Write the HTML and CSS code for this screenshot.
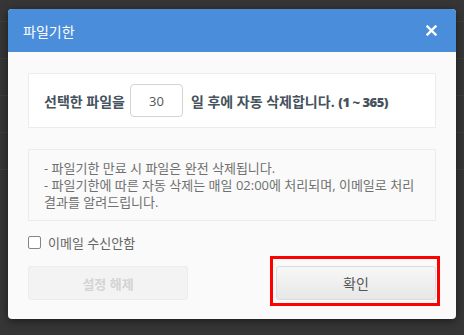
FILE: index.html
```html
<!DOCTYPE html>
<html lang="ko">

<head>
    <meta charset="UTF-8">
    <meta name="viewport" content="width=device-width, initial-scale=1.0">
    <title>파일기한</title>

    <link rel="stylesheet" href="styles.css">
</head>

<body>
    <div id="fundo">
        <div class="barra"></div>
        <div class="linha"></div>
        <div class="linha"></div>
        <div class="linha"></div>
        <div class="linha"></div>
    </div>

    <div id="dialogo">
        <div class="cabecalho">
            <span class="titulo">파일기한</span>
            <svg class="fechar" width="11" height="11" viewBox="0 0 11 11">
                <path d="M1.5 1.5 L9.5 9.5 M9.5 1.5 L1.5 9.5" stroke="#fff" stroke-width="2.4" stroke-linecap="square" />
            </svg>
        </div>
        <div class="corpo">
            <div class="caixa-dias">
                <span>선택한 파일을</span>
                <input class="dias" type="text" value="30">
                <span class="depois">일 후에 자동 삭제합니다. <b>(1 ~ 365)</b></span>
            </div>
            <div class="caixa-info">
                <p>- 파일기한 만료 시 파일은 완전 삭제됩니다.</p>
                <p>- 파일기한에 따른 자동 삭제는 매일 02:00에 처리되며, 이메일로 처리 결과를 알려드립니다.</p>
            </div>
            <label class="opcao">
                <input type="checkbox">
                <span>이메일 수신안함</span>
            </label>
            <div class="botoes">
                <button class="btn" disabled>설정 해제</button>
                <div class="destaque-wrap">
                    <button class="btn btn-ok">확인</button>
                    <div class="destaque"></div>
                </div>
            </div>
        </div>
    </div>
</body>

</html>
```

FILE: styles.css
```css
* {
    box-sizing: border-box;
}

body {
    margin: 0;
    width: 464px;
    height: 335px;
    overflow: hidden;
    background-color: #363636;
    font-family: "Open Sans", "Noto Sans CJK KR", sans-serif;
    position: relative;
}

#fundo .barra {
    height: 22px;
    border-bottom: 1px solid #3f3f3f;
}

#fundo .linha {
    height: 37px;
    border-bottom: 1px solid #3f3f3f;
}

#dialogo {
    position: absolute;
    top: 9px;
    left: 8px;
    width: 448px;
    background-color: #fafafa;
    border-radius: 4px;
    overflow: hidden;
    box-shadow: 0 2px 8px rgba(0, 0, 0, 0.5);
}

.cabecalho {
    height: 43px;
    background-color: #4a8edb;
    display: flex;
    align-items: center;
    justify-content: space-between;
    padding: 0 19px 0 15px;
}

.titulo {
    color: #fff;
    font-size: 14px;
}

.fechar {
    display: block;
}

.corpo {
    padding: 21px 20px 19px;
    display: flex;
    flex-direction: column;
}

.caixa-dias {
    background-color: #fff;
    border: 1px solid #ececec;
    padding: 10px 15px;
    display: flex;
    align-items: center;
    font-size: 14px;
    font-weight: bold;
    color: #46525d;
}

.caixa-dias b {
    font-family: "Open Sans", sans-serif;
    font-size: 13px;
    letter-spacing: -0.5px;
}

.dias {
    width: 53px;
    height: 33px;
    margin: 0 8px 0 5px;
    border: 1px solid #d4d4d4;
    border-radius: 4px;
    text-align: center;
    font-family: "Open Sans", sans-serif;
    font-size: 13px;
    color: #555;
    padding: 0;
}

.caixa-info {
    margin-top: 21px;
    border: 1px solid #ececec;
    padding: 10px 15px 9px;
    font-size: 13px;
    line-height: 17px;
    color: #707070;
}

.caixa-info p {
    margin: 0;
}

.opcao {
    margin-top: 12px;
    height: 19px;
    display: flex;
    align-items: center;
    gap: 7px;
    font-size: 13px;
    color: #666;
}

.opcao input {
    appearance: none;
    width: 13px;
    height: 13px;
    margin: 0;
    border: 1px solid #858585;
    border-radius: 2px;
    background-color: #fff;
}

.botoes {
    margin-top: 14px;
    display: flex;
    justify-content: space-between;
}

.btn {
    width: 160px;
    height: 34px;
    border: 1px solid #ececec;
    border-radius: 3px;
    background-color: #f3f3f3;
    color: #d4d4d4;
    font-family: "Open Sans", "Noto Sans CJK KR", sans-serif;
    font-size: 13px;
    font-weight: bold;
}

.btn-ok {
    border-color: #dcdcdc;
    background: linear-gradient(#f7f7f7, #e7e7e7);
    color: #555;
    font-weight: normal;
    font-size: 14px;
}

.destaque-wrap {
    position: relative;
    display: flex;
}

.destaque {
    position: absolute;
    left: -6px;
    top: -10px;
    width: 170px;
    height: 50px;
    border: 3px solid #f00;
}
```
